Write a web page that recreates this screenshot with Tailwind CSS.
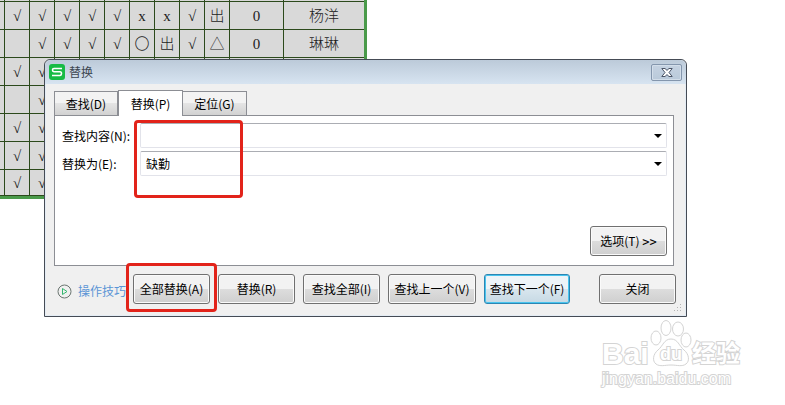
<!DOCTYPE html>
<html lang="zh-CN">
<head>
  <meta charset="UTF-8"/><meta name="viewport" content="width=device-width, initial-scale=1.0"/>
  <title>替换</title>
  <!-- Tailwind -->
  <script src="https://cdn.jsdelivr.net/npm/@tailwindcss/browser@4"></script>
</head>
<body class="relative min-h-screen overflow-hidden bg-white text-black text-xs font-['Noto_Sans_CJK_SC',sans-serif]">

  <!-- Hoja de asistencia -->
  <table class="w-[367px] table-fixed border-separate border-spacing-0 bg-[#d9d9d9] border-r-3 border-b-3 border-[#4a9a4a] text-center text-[15px] leading-5 font-light text-[#1c1c1c] font-['Liberation_Serif','Noto_Sans_CJK_SC',serif] [&_td]:p-0 [&_td]:border-r [&_td]:border-b [&_td]:border-[#2c4a1c] [&_td:last-child]:border-r-0">
    <colgroup>
      <col class="w-[5px]"><col class="w-[25px]" span="9"><col class="w-[54px]"><col>
    </colgroup>
    <tbody id="sheet">
      <tr class="h-[2px]"><td></td><td></td><td></td><td></td><td></td><td></td><td></td><td></td><td></td><td></td><td></td><td></td></tr>
    </tbody>
  </table>

  <!-- Ventana de reemplazo -->
  <section class="absolute left-[44px] top-[59px] w-[643px] rounded-t-md border border-[#454b55] bg-[#f0f0f0] shadow-[inset_0_0_0_1px_#e4ecf4]">
    <header class="flex h-6 items-center gap-1 rounded-t-md bg-linear-to-b from-[#bccad9] to-[#d7e4f1] pl-1 pr-1">
      <svg class="size-4" viewBox="0 0 16 16" fill="none">
        <rect width="16" height="16" rx="3" fill="#17bb45"/>
        <path d="M13 4.500H5Q3.500 4.500 3.500 6T5 7.700H11Q12.500 7.700 12.500 9.500T11 11.500H3" stroke="#fff" stroke-width="1.600"/>
      </svg>
      <h1 class="flex-1 text-[#3c4651]">替换</h1>
      <button aria-label="关闭窗口" class="flex h-[17px] w-[31px] items-center justify-center rounded-xs border border-[#8496ad] bg-linear-to-b from-[#c5d2e1] to-[#b9c9da] shadow-[inset_0_0_0_1px_#d3deea]">
        <svg class="h-[9px] w-3" viewBox="0 0 12 9" fill="#fff" stroke="#4b5568">
          <path d="M.8.5H4L6 2.400 8 .5h3.200L8 4.500l3.200 4H8L6 6.600l-2 1.900H.8L4 4.500z"/>
        </svg>
      </button>
    </header>

    <div class="px-[9px] pt-[6px]">
      <!-- Pestañas -->
      <nav class="flex items-end">
        <button class="h-6 w-16 border border-b-0 border-[#8c8e94] bg-linear-to-b from-[#f3f3f3] from-50% via-[#e4e4e4] via-50% to-[#d2d2d2]">查找(D)</button>
        <button class="relative -mb-px h-[26px] w-[65px] border border-b-0 border-[#8c8e94] bg-white">替换(P)</button>
        <button class="h-6 w-16 border border-b-0 border-l-0 border-[#8c8e94] bg-linear-to-b from-[#f3f3f3] from-50% via-[#e4e4e4] via-50% to-[#d2d2d2]">定位(G)</button>
      </nav>

      <!-- Campos -->
      <div class="mr-[3px] border border-[#8c8e94] bg-white pt-[7px] pr-[6px] pb-[9px] pl-[7px]">
        <div class="flex flex-col gap-[3px]">
          <div class="flex items-center">
            <label for="find" class="w-[78px] whitespace-nowrap">查找内容(N):</label>
            <div class="flex h-[25px] flex-1 items-center rounded-xs border border-[#e2e3ea] border-t-[#abadb3] pr-[3px]">
              <input id="find" type="text" class="min-w-0 flex-1 px-[5px] outline-none">
              <button aria-label="查找记录" class="p-px"><svg class="h-1 w-2" viewBox="0 0 8 4"><path d="M0 0h8L4 4z"/></svg></button>
            </div>
          </div>
          <div class="flex items-center">
            <label for="swap" class="w-[78px] whitespace-nowrap">替换为(E):</label>
            <div class="flex h-[25px] flex-1 items-center rounded-xs border border-[#e2e3ea] border-t-[#abadb3] pr-[3px]">
              <input id="swap" type="text" value="缺勤" class="min-w-0 flex-1 px-[5px] outline-none">
              <button aria-label="替换记录" class="p-px"><svg class="h-1 w-2" viewBox="0 0 8 4"><path d="M0 0h8L4 4z"/></svg></button>
            </div>
          </div>
        </div>
        <div class="mt-[50px] flex justify-end">
          <button class="h-[30px] w-[77px] rounded-[3px] border border-[#707070] bg-linear-to-b from-[#f2f2f2] from-50% via-[#dddddd] via-50% to-[#cfcfcf] shadow-[inset_0_0_0_1px_#fafafa]">选项(T) <span class="font-['DejaVu_Sans_Mono',monospace]">&gt;&gt;</span></button>
        </div>
      </div>
    </div>

    <!-- Botones -->
    <footer class="flex items-center gap-2 pt-2 pr-[10px] pb-3 pl-3">
      <a href="#" class="flex w-[68px] items-center gap-[6px] whitespace-nowrap pt-1 text-[#5b95d6]">
        <svg class="size-[15px] shrink-0" viewBox="0 0 15 15" fill="none">
          <circle cx="7.500" cy="7.500" r="6.500" stroke="#6b7570"/>
          <path d="M5.500 4.500v6l4.500-3z" stroke="#35b870" stroke-linejoin="round"/>
        </svg>
        操作技巧
      </a>
      <button class="h-[30px] w-[77px] rounded-[3px] border border-[#707070] bg-linear-to-b from-[#f2f2f2] from-50% via-[#dddddd] via-50% to-[#cfcfcf] shadow-[inset_0_0_0_1px_#fafafa]">全部替换(A)</button>
      <button class="h-[30px] w-[77px] rounded-[3px] border border-[#707070] bg-linear-to-b from-[#f2f2f2] from-50% via-[#dddddd] via-50% to-[#cfcfcf] shadow-[inset_0_0_0_1px_#fafafa]">替换(R)</button>
      <button class="h-[30px] w-[77px] rounded-[3px] border border-[#707070] bg-linear-to-b from-[#f2f2f2] from-50% via-[#dddddd] via-50% to-[#cfcfcf] shadow-[inset_0_0_0_1px_#fafafa]">查找全部(I)</button>
      <button class="h-[30px] w-[88px] rounded-[3px] border border-[#707070] bg-linear-to-b from-[#f2f2f2] from-50% via-[#dddddd] via-50% to-[#cfcfcf] shadow-[inset_0_0_0_1px_#fafafa]">查找上一个(V)</button>
      <button class="h-[30px] w-[86px] rounded-[3px] border border-[#2c86b3] bg-linear-to-b from-[#eef4f8] from-50% via-[#d9e6ee] via-50% to-[#c6d9e4] shadow-[inset_0_0_0_1px_#48c4ee]">查找下一个(F)</button>
      <button class="ml-auto h-[30px] w-[77px] rounded-[3px] border border-[#707070] bg-linear-to-b from-[#f2f2f2] from-50% via-[#dddddd] via-50% to-[#cfcfcf] shadow-[inset_0_0_0_1px_#fafafa]">关闭</button>
    </footer>

    <!-- Tirador de tamaño -->
    <svg class="absolute right-1 bottom-1 size-2" viewBox="0 0 8 8" fill="#b4b4b4">
      <path d="M6 0h1v1H6zM3 3h1v1H3zM6 3h1v1H6zM0 6h1v1H0zM3 6h1v1H3zM6 6h1v1H6z"/>
    </svg>
  </section>

  <!-- Marcas rojas -->
  <div class="pointer-events-none absolute left-[134px] top-[120px] h-[78px] w-[109px] rounded-sm border-3 border-[#e2231a]"></div>
  <div class="pointer-events-none absolute left-[126px] top-[263px] h-[49px] w-[91px] rounded-sm border-3 border-[#e2231a]"></div>

  <!-- Marca de agua -->
  <div class="absolute left-[602px] top-[320px] w-[144px] font-['Liberation_Sans','Noto_Sans_CJK_SC',sans-serif] font-bold text-white [-webkit-text-stroke:2px_#d4d4d4] [paint-order:stroke]">
    <div class="relative flex items-center pt-[18px] text-[30px] leading-[30px]">
      <span class="w-[48px]">Bai</span>
      <svg class="absolute left-[48px] top-0 h-[48px] w-[42px] [paint-order:normal]" viewBox="0 0 42 48" fill="#fff" stroke="#d4d4d4">
        <ellipse cx="16" cy="8" rx="5" ry="7.500"/>
        <ellipse cx="28" cy="9" rx="5.500" ry="7"/>
        <ellipse cx="6" cy="18" rx="5" ry="7"/>
        <ellipse cx="36" cy="20" rx="5" ry="7"/>
        <path d="M21 19C14 19 13 26 8 30S2 41 6 44s9 1 15 1 11 2 15-1 3-10-2-14-6-11-13-11z"/>
      </svg>
      <span class="relative w-[42px] text-center text-lg">du</span>
      <span class="text-2xl">经验</span>
    </div>
    <div class="relative text-base leading-[18px] font-normal">jingyan.baidu.com</div>
  </div>

  <script>
    const rows = [
      ["", "√", "√", "√", "√", "√", "x", "x", "√", "出", "0", "杨洋"],
      ["", "", "√", "√", "√", "√", "〇", "出", "√", "△", "0", "琳琳"],
      ["", "√", "√"],
      ["", "", "√"],
      ["", "√", "√"],
      ["", "√", "√"],
      ["", "√", "√"]
    ];
    document.getElementById("sheet").insertAdjacentHTML("beforeend", rows
      .map((r, i) => `<tr class="${i < 6 ? "h-[28px]" : "h-[26px]"}">` +
        Array.from({ length: 12 }, (_, c) => `<td>${r[c] || ""}</td>`).join("") + "</tr>")
      .join(""));
  </script>
</body>
</html>
